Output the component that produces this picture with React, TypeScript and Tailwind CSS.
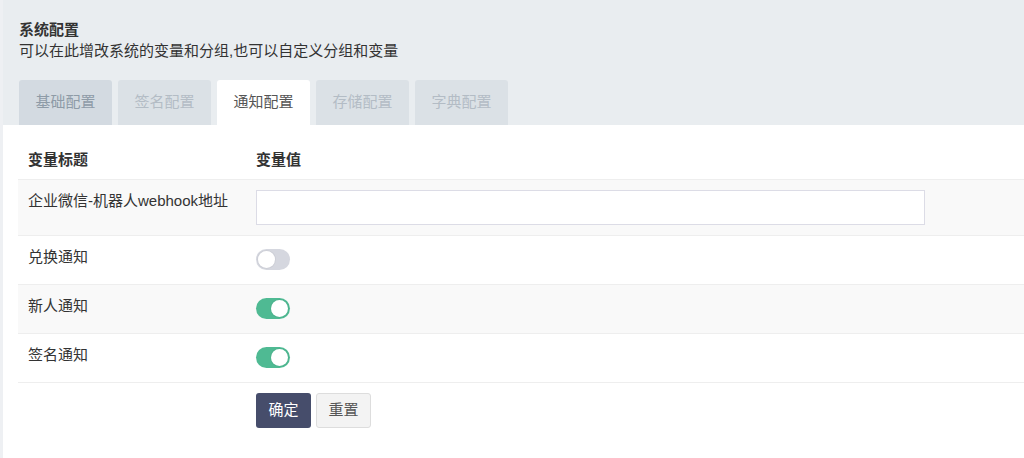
import { useState } from "react";

const font = { fontFamily: '"Liberation Sans", "Noto Sans CJK SC", sans-serif' };

const tabs = [
  { name: "基础配置", state: "hover" },
  { name: "签名配置", state: "idle" },
  { name: "通知配置", state: "active" },
  { name: "存储配置", state: "idle" },
  { name: "字典配置", state: "idle" },
];

function Toggle({ on, onChange }: { on: boolean; onChange: () => void }) {
  return (
    <button
      type="button"
      onClick={onChange}
      className={
        "relative mt-[3px] block h-[21px] w-[34px] rounded-full " +
        (on ? "bg-[#4fba93]" : "bg-[#d5d7df]")
      }
    >
      <span
        className={
          "absolute top-[2px] h-[17px] w-[17px] rounded-full bg-white shadow-[0_0_0_1px_rgba(0,0,0,0.04)] " +
          (on ? "left-[15px]" : "left-[2px]")
        }
      />
    </button>
  );
}

export default function App() {
  const [flags, setFlags] = useState({ exchange: false, newbie: true, sign: true });

  const rows = [
    { key: "exchange" as const, label: "兑换通知", striped: false },
    { key: "newbie" as const, label: "新人通知", striped: true },
    { key: "sign" as const, label: "签名通知", striped: false },
  ];

  return (
    <div style={font} className="min-h-[458px] border-l-[3px] border-[#eef0f3] bg-white text-[15px] text-[#333]">
      <div className="bg-[#e9edf0] pl-4 pt-[19px]">
        <h1 className="text-[15px] leading-[21px] font-bold text-[#333]">系统配置</h1>
        <p className="leading-[21px] text-[#333]">可以在此增改系统的变量和分组,也可以自定义分组和变量</p>
        <div className="mt-[19px] flex gap-[6px]">
          {tabs.map((t) => (
            <div
              key={t.name}
              className={
                "flex h-[45px] w-[93px] items-center justify-center rounded-t-[3px] " +
                (t.state === "active"
                  ? "bg-white text-[#555]"
                  : t.state === "hover"
                    ? "bg-[#d3dae1] text-[#8e9ba7]"
                    : "bg-[#dbe1e6] text-[#b3bcc5]")
              }
            >
              {t.name}
            </div>
          ))}
        </div>
      </div>

      <div className="pl-[15px] pt-4">
        <div className="flex h-[38px] items-center font-bold">
          <div className="w-[238px] pl-[10px]">变量标题</div>
          <div>变量值</div>
        </div>

        <div className="flex h-[56px] border-t border-[#eeeeee] bg-[#f9f9f9]">
          <div className="w-[238px] pl-[10px] pt-[10px] leading-[21px]">企业微信-机器人webhook地址</div>
          <div className="pt-[10px]">
            <input
              type="text"
              className="h-[35px] w-[669px] border border-[#dcdce6] bg-white px-2 outline-none"
            />
          </div>
        </div>

        {rows.map((r) => (
          <div
            key={r.key}
            className={"flex h-[49px] border-t border-[#eeeeee] " + (r.striped ? "bg-[#f9f9f9]" : "")}
          >
            <div className="w-[238px] pl-[10px] pt-[10px] leading-[21px]">{r.label}</div>
            <div className="pt-[10px]">
              <Toggle on={flags[r.key]} onChange={() => setFlags({ ...flags, [r.key]: !flags[r.key] })} />
            </div>
          </div>
        ))}

        <div className="flex gap-[5px] border-t border-[#eeeeee] pl-[238px] pt-[10px]">
          <button
            type="button"
            className="h-[35px] w-[55px] rounded-[3px] bg-[#464d6b] text-white"
          >
            确定
          </button>
          <button
            type="button"
            className="h-[35px] w-[55px] rounded-[3px] border border-[#dddddd] bg-[#f3f3f3] text-[#555]"
          >
            重置
          </button>
        </div>
      </div>
    </div>
  );
}
